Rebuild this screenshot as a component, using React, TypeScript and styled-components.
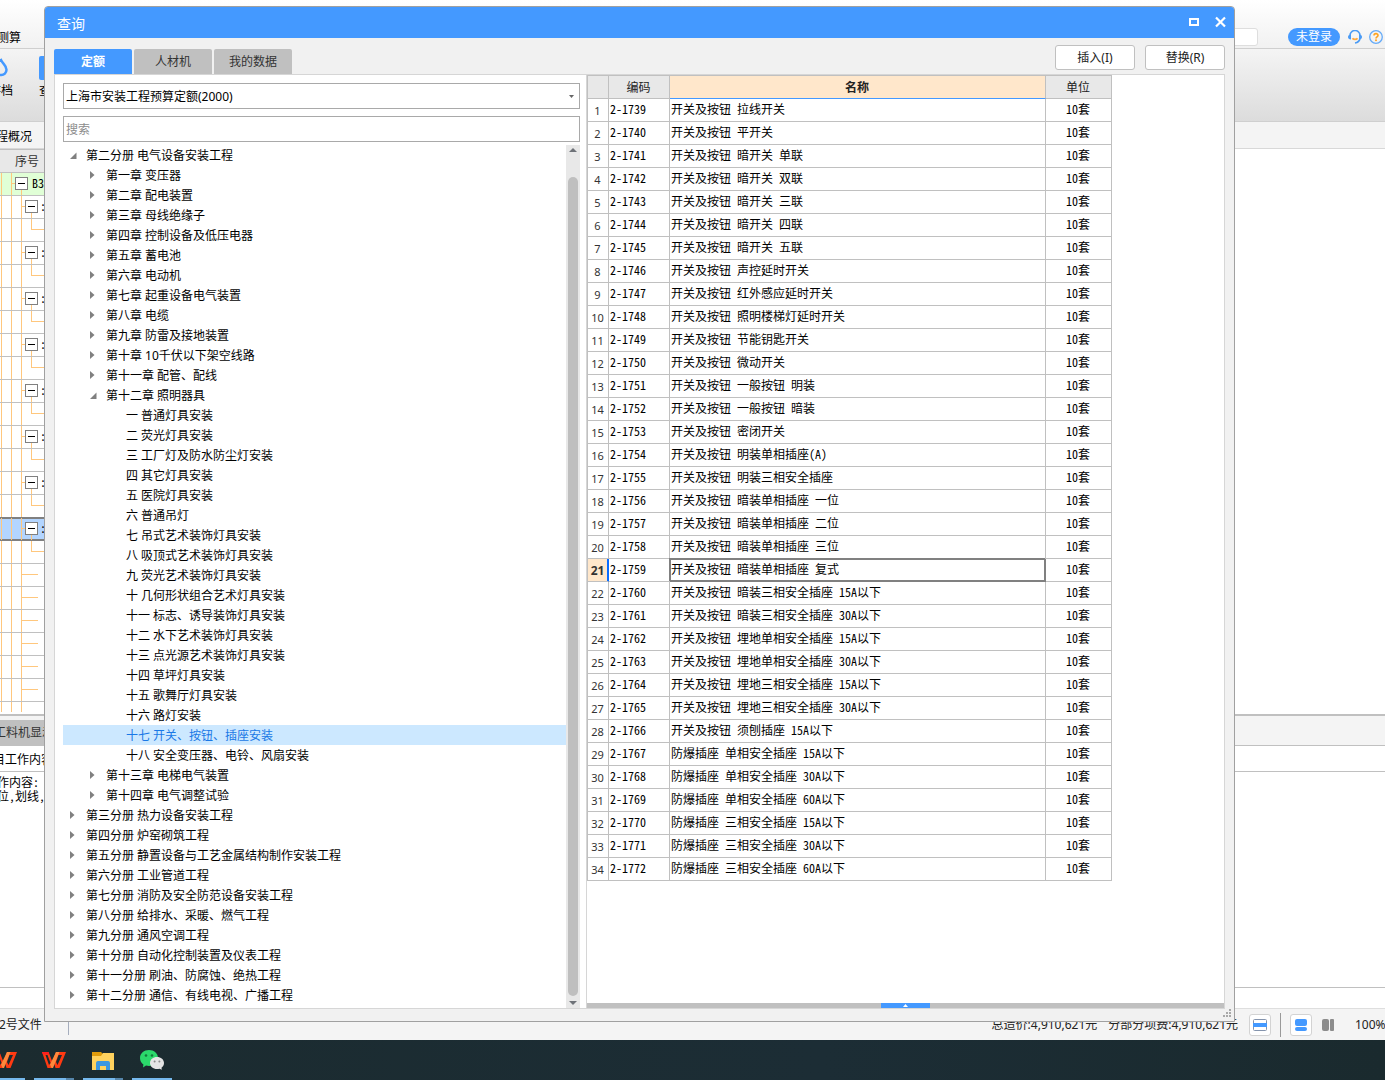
import React, { useState } from 'react';
import styled, { createGlobalStyle, css } from 'styled-components';

const UI_FONT = '"Noto Sans", "Noto Sans CJK SC", sans-serif';
const GRID_FONT = '"Noto Sans Mono CJK SC", "Noto Sans CJK SC", monospace';

const color = {
  blue: '#4499ff',
  line: '#c0c0c0',
  soft: '#d6d6d6',
  panel: '#f1f1f1',
  orange: '#ffc77d',
  peach: '#ffe7cb',
};

const GlobalStyle = createGlobalStyle`
  *, *::before, *::after { box-sizing: border-box; }
  body { margin: 0; overflow: hidden; font: 12px/20px ${UI_FONT}; color: #000; }
  button, input, select { font: inherit; color: inherit; margin: 0; padding: 0; }
  button { border: 0; background: none; white-space: nowrap; }
  h1, h2, p, ul { margin: 0; padding: 0; font: inherit; list-style: none; }
  svg { display: block; flex: none; }
`;

const Desktop = styled.div`
  position: relative;
  display: flex;
  flex-direction: column;
  height: 100vh;
  overflow: hidden;
  background: #fff;
`;

/* ---------- main window behind the dialog ---------- */

const Shell = styled.div`
  display: flex;
  flex-direction: column;
  flex: 1;
  min-height: 0;
  margin-left: -20px;
  white-space: nowrap;
`;

const AppHeader = styled.header`
  display: flex;
  justify-content: space-between;
  align-items: flex-start;
  height: 49px;
  padding: 28px 2px 0 17px;
  border-bottom: 1px solid #cfcfcf;
  background: linear-gradient(#fff, #f1f1f1);
`;

const HeaderTools = styled.div`
  display: flex;
  align-items: center;
  height: 18px;
`;

const HeaderSearch = styled.input`
  width: 220px;
  height: 18px;
  margin-right: 30px;
  border: 1px solid #dedede;
  border-radius: 3px;
  background: #fff;
`;

const LoginPill = styled.button`
  width: 52px;
  height: 18px;
  margin-right: 8px;
  border-radius: 9px;
  background: ${color.blue};
  color: #fff;
  line-height: 18px;
`;

const IconButton = styled.button`
  width: 14px;
  height: 14px;
  & + & { margin-left: 7px; }
`;

const Ribbon = styled.div`
  display: flex;
  gap: 26px;
  height: 73px;
  padding: 7px 0 0 9px;
  border-bottom: 1px solid #cfcfcf;
  background: linear-gradient(#f4f4f4, #dcdcdc);
`;

const RibbonButton = styled.button`
  display: flex;
  flex-direction: column;
  align-items: center;
  gap: 1px;
  height: 50px;
`;

const AppTabs = styled.nav`
  height: 27px;
  padding: 5px 0 0 4px;
  border-bottom: 1px solid #d8d8d8;
  background: #f4f4f4;
`;

const Work = styled.main`
  flex: 1;
  min-height: 0;
  overflow: hidden;
`;

const Outline = styled.div`
  width: 400px;
  font-family: ${GRID_FONT};
`;

const OutlineHead = styled.div`
  height: 24px;
  padding: 1px 0 0 35px;
  border-top: 1px solid ${color.line};
  border-bottom: 1px solid ${color.line};
  background: #e8e8e8;
  color: #333;
`;

const OutlineRow = styled.div<{ $tone?: 'root' | 'active' }>`
  display: flex;
  height: 23px;
  line-height: 20px;
  border-bottom: 1px solid ${color.line};
  ${p => p.$tone === 'root' && css`background: #e0ffd6;`}
  ${p => p.$tone === 'active' && css`
    background: #b3d5ff;
    border-bottom-color: #808080;
    box-shadow: 0 -1px #808080, inset 0 1px #808080, inset 0 -1px #808080;
  `}
`;

const Details = styled.section`
  border-top: 2px solid ${color.line};
  background: #fff;
`;

const DetailsTabs = styled.div`
  display: flex;
  align-items: flex-end;
  height: 30px;
  border-bottom: 1px solid ${color.line};
  background: #f4f4f4;
`;

const DetailsTab = styled.button`
  height: 25px;
  padding: 1px 8px 0 14px;
  background: ${color.line};
  color: #333;
`;

const DetailsTitle = styled.h2`
  height: 26px;
  padding: 4px 0 0 1px;
  border-bottom: 1px solid ${color.line};
`;

const DetailsText = styled.p`
  height: 216px;
  padding: 3px 0 0 5px;
  border-bottom: 1px solid ${color.line};
  font: 12px/14px ${GRID_FONT};
`;

const DetailsFoot = styled.div`
  height: 21px;
  border-bottom: 1px solid #dedede;
`;

const StatusBar = styled.footer`
  display: flex;
  align-items: center;
  height: 31px;
  padding-left: 19px;
  background: #f4f4f4;
  color: #222;
`;

const FileName = styled.span`
  padding-right: 26px;
  border-right: 1px solid #a5adbd;
`;

const Totals = styled.span`
  display: flex;
  gap: 11px;
  margin-left: auto;
  margin-right: 11px;
`;

const ViewButton = styled.button<{ $framed?: boolean }>`
  display: grid;
  place-items: center;
  width: 22px;
  height: 22px;
  ${p => p.$framed && css`
    border: 1px solid #d3d3d3;
    border-radius: 3px;
    background: #fff;
  `}
`;

const LayoutButtons = styled.div`
  display: flex;
  gap: 5px;
`;

const StatusRule = styled.i`
  width: 1px;
  height: 24px;
  margin: 0 9px;
  background: #999;
`;

const ZoomValue = styled.span`
  width: 30px;
  margin-left: 16px;
`;

const TaskBar = styled.nav`
  display: flex;
  gap: 9px;
  height: 40px;
  margin-left: -20px;
  padding-left: 5px;
  background: linear-gradient(90deg, #1b2b2f, #1c2d35 60%, #1a2a2e);
`;

const Task = styled.button<{ $stacked?: boolean }>`
  display: grid;
  place-items: center;
  width: 40px;
  height: 40px;
  padding-top: 2px;
  border-bottom: 2px solid #76b9ed;
  ${p => p.$stacked && css`
    border-image: linear-gradient(90deg, #76b9ed 31px, #5686ab 31px) 2;
  `}
`;

/* ---------- dialog ---------- */

const Dialog = styled.section`
  position: absolute;
  inset: 6px 150px 58px 44px;
  display: flex;
  flex-direction: column;
  border: 1px solid #a0a0a0;
  border-radius: 4px 4px 0 0;
  background: ${color.panel};
  overflow: hidden;
`;

const TitleBar = styled.header`
  display: flex;
  align-items: center;
  justify-content: space-between;
  height: 31px;
  padding: 2px 8px 0 12px;
  background: ${color.blue};
  color: #fff;
  h1 { font-size: 14px; }
`;

const WindowButtons = styled.div`
  display: flex;
  gap: 15px;
  padding-bottom: 3px;
`;

const WindowButton = styled.button`
  width: 11px;
  height: 12px;
`;

const DialogTools = styled.div`
  display: flex;
  justify-content: space-between;
  align-items: flex-end;
  height: 36px;
  padding: 0 9px;
`;

const TabList = styled.div`
  display: flex;
  gap: 2px;
`;

const Tab = styled.button<{ $active: boolean }>`
  width: 78px;
  height: 25px;
  border-radius: 2px 2px 0 0;
  line-height: 24px;
  background: ${p => (p.$active ? color.blue : color.line)};
  color: ${p => (p.$active ? '#fff' : '#333')};
  font-weight: ${p => (p.$active ? 700 : 400)};
`;

const Actions = styled.div`
  display: flex;
  gap: 10px;
  align-self: flex-start;
  padding-top: 7px;
`;

const ActionButton = styled.button`
  width: 80px;
  height: 25px;
  border: 1px solid ${color.line};
  border-radius: 3px;
  background: #fff;
  color: #222;
  line-height: 23px;
`;

const DialogBody = styled.div`
  display: flex;
  flex: 1;
  min-height: 0;
  margin: 0 9px;
  border: 1px solid ${color.soft};
  background: #fff;
`;

const DialogFoot = styled.div`
  display: flex;
  justify-content: flex-end;
  height: 12px;
  padding: 0 3px;
`;

const Catalog = styled.div`
  display: flex;
  flex-direction: column;
  width: 531px;
  flex: none;
  padding: 8px 6px 0 8px;
`;

const SelectBox = styled.div`
  display: grid;
  align-items: center;
  margin-bottom: 7px;
  > * { grid-area: 1 / 1; }
  > svg { justify-self: end; margin-right: 6px; pointer-events: none; }
`;

const fieldBox = css`
  width: 100%;
  height: 26px;
  padding: 1px 2px 0;
  border: 1px solid #a9a9a9;
  border-radius: 0;
  background: #fff;
  outline: 0;
`;

const Select = styled.select`
  ${fieldBox}
  appearance: none;
`;

const Search = styled.input`
  ${fieldBox}
  margin-bottom: 3px;
  &::placeholder { color: #8c8c8c; opacity: 1; }
`;

const TreeArea = styled.div`
  display: flex;
  flex: 1;
  min-height: 0;
`;

const Tree = styled.ul`
  flex: 1;
  overflow: hidden;
`;

const TreeNode = styled.button<{ $level: number; $selected: boolean }>`
  display: flex;
  width: 100%;
  height: 20px;
  padding-left: ${p => 3 + p.$level * 20}px;
  line-height: 22px;
  background: ${p => (p.$selected ? '#cce8ff' : 'transparent')};
  color: ${p => (p.$selected ? '#1a78e6' : '#000')};
`;

const ScrollTrack = styled.div`
  display: flex;
  flex-direction: column;
  align-items: center;
  width: 14px;
  background: #e8e8e8;
`;

const ScrollThumb = styled.div`
  flex: 1;
  width: 10px;
  margin: 22px 0 2px;
  border-radius: 5px;
  background: #bfbfbf;
`;

const Results = styled.div`
  display: flex;
  flex-direction: column;
  flex: 1;
  min-width: 0;
  border-left: 1px solid ${color.soft};
`;

const TableArea = styled.div`
  flex: 1;
  min-height: 0;
  overflow: hidden;
`;

const Table = styled.table`
  width: 525px;
  table-layout: fixed;
  border-collapse: separate;
  border-spacing: 0;
  font: 12px/20px ${GRID_FONT};
`;

const Th = styled.th<{ $active?: boolean }>`
  height: 24px;
  padding: 0 1px 0 0;
  border: 1px solid ${color.line};
  border-left-width: 0;
  background: ${p => (p.$active ? color.peach : '#e8e8e8')};
  font-weight: ${p => (p.$active ? 700 : 400)};
  color: #222;
  ${p => p.$active && css`border-bottom-color: ${color.blue};`}
  &:first-child { border-left-width: 1px; }
`;

const RowNumber = styled.th<{ $current: boolean }>`
  height: 23px;
  padding: 2px 1px 0 0;
  border: 1px solid ${color.line};
  border-top: 0;
  font-family: ${UI_FONT};
  font-size: ${p => (p.$current ? 12 : 11)}px;
  font-weight: ${p => (p.$current ? 700 : 400)};
  color: #333;
  ${p => p.$current && css`
    background: ${color.peach};
    box-shadow: inset -1px 0 #0a6cff;
    border-right-color: #0a6cff;
  `}
`;

const Td = styled.td<{ $center?: boolean; $focus?: boolean }>`
  height: 23px;
  padding: 0 2px 2px 1px;
  border: 1px solid ${color.line};
  border-width: 0 1px 1px 0;
  text-align: ${p => (p.$center ? 'center' : 'left')};
  white-space: nowrap;
  ${p => p.$focus && css`
    border-color: #808080;
    box-shadow: inset 0 0 0 1px #808080, -1px -1px #808080;
  `}
`;

const BottomSplitter = styled.div`
  display: flex;
  justify-content: center;
  height: 5px;
  background: ${color.line};
`;

const SplitterHandle = styled.button`
  display: grid;
  place-items: center;
  width: 49px;
  height: 5px;
  background: ${color.blue};
`;

/* ---------- data ---------- */

type Node = { level: number; text: string; state?: 'open' | 'closed' };

const closed = (level: number, names: string[]): Node[] =>
  names.map(text => ({ level, text, state: 'closed' }));

const nodes: Node[] = [
  { level: 0, text: '第二分册 电气设备安装工程', state: 'open' },
  ...closed(1, [
    '第一章 变压器', '第二章 配电装置', '第三章 母线绝缘子', '第四章 控制设备及低压电器',
    '第五章 蓄电池', '第六章 电动机', '第七章 起重设备电气装置', '第八章 电缆',
    '第九章 防雷及接地装置', '第十章 10千伏以下架空线路', '第十一章 配管、配线',
  ]),
  { level: 1, text: '第十二章 照明器具', state: 'open' },
  ...[
    '一 普通灯具安装', '二 荧光灯具安装', '三 工厂灯及防水防尘灯安装', '四 其它灯具安装',
    '五 医院灯具安装', '六 普通吊灯', '七 吊式艺术装饰灯具安装', '八 吸顶式艺术装饰灯具安装',
    '九 荧光艺术装饰灯具安装', '十 几何形状组合艺术灯具安装', '十一 标志、诱导装饰灯具安装',
    '十二 水下艺术装饰灯具安装', '十三 点光源艺术装饰灯具安装', '十四 草坪灯具安装',
    '十五 歌舞厅灯具安装', '十六 路灯安装', '十七 开关、按钮、插座安装',
    '十八 安全变压器、电铃、风扇安装',
  ].map(text => ({ level: 2, text })),
  ...closed(1, ['第十三章 电梯电气装置', '第十四章 电气调整试验']),
  ...closed(0, [
    '第三分册 热力设备安装工程', '第四分册 炉窑砌筑工程', '第五分册 静置设备与工艺金属结构制作安装工程',
    '第六分册 工业管道工程', '第七分册 消防及安全防范设备安装工程', '第八分册 给排水、采暖、燃气工程',
    '第九分册 通风空调工程', '第十分册 自动化控制装置及仪表工程', '第十一分册 刷油、防腐蚀、绝热工程',
    '第十二分册 通信、有线电视、广播工程',
  ]),
];

const switchNames = [
  '拉线开关', '平开关', '暗开关 单联', '暗开关 双联', '暗开关 三联', '暗开关 四联', '暗开关 五联',
  '声控延时开关', '红外感应延时开关', '照明楼梯灯延时开关', '节能钥匙开关', '微动开关',
  '一般按钮 明装', '一般按钮 暗装', '密闭开关', '明装单相插座(A)', '明装三相安全插座',
  '暗装单相插座 一位', '暗装单相插座 二位', '暗装单相插座 三位', '暗装单相插座 复式',
  '暗装三相安全插座 15A以下', '暗装三相安全插座 30A以下', '埋地单相安全插座 15A以下',
  '埋地单相安全插座 30A以下', '埋地三相安全插座 15A以下', '埋地三相安全插座 30A以下', '须刨插座 15A以下',
];
const proofNames = [
  '单相安全插座 15A以下', '单相安全插座 30A以下', '单相安全插座 60A以下',
  '三相安全插座 15A以下', '三相安全插座 30A以下', '三相安全插座 60A以下',
];
const items = [
  ...switchNames.map(n => `开关及按钮 ${n}`),
  ...proofNames.map(n => `防爆插座 ${n}`),
].map((name, i) => ({ code: `2-${1739 + i}`, name }));

type Branch = 'root' | 'parent' | 'child' | 'leaf';
const branches: Branch[] = [
  'root',
  ...Array.from({ length: 8 }).flatMap((): Branch[] => ['parent', 'child']),
  ...Array.from({ length: 6 }, (): Branch => 'leaf'),
];
const ACTIVE_BRANCH = 15;
const branchWidth = { root: 52, parent: 60, child: 64, leaf: 64 };

/* ---------- drawings ---------- */

const Arrow = ({ state }: { state?: 'open' | 'closed' }) => (
  <svg width="20" height="20" fill="#808080" aria-hidden="true">
    {state === 'closed' && <path d="M4 6l4.500 4-4.500 4z" />}
    {state === 'open' && <path d="M10.500 7.500v6.500H4z" />}
  </svg>
);

const BranchLines = ({ kind }: { kind: Branch }) => (
  <svg width={branchWidth[kind]} height="22" fill="none" stroke={color.orange} shapeRendering="crispEdges" aria-hidden="true">
    <path d="M21.500 0v22M31.500 0v22" />
    {kind === 'root' && <path d="M32 10.500h4M41.500 17v5" />}
    {kind !== 'root' && <path d="M41.500 0v22" />}
    {kind === 'parent' && <path d="M42 10.500h4M51.500 17v5" />}
    {kind === 'child' && <path d="M51.500 0v10.500h13" />}
    {kind === 'leaf' && <path d="M42 10.500h16" />}
    {(kind === 'root' || kind === 'parent') && (
      <g transform={kind === 'root' ? 'translate(35 4)' : 'translate(45 4)'}>
        <rect x=".5" y=".5" width="12" height="12" fill="#fff" stroke="#808080" />
        <path d="M3 6.500h7" stroke="#000" />
      </g>
    )}
  </svg>
);

const LinesTail = () => (
  <svg width="60" height="10" stroke={color.orange} shapeRendering="crispEdges" aria-hidden="true">
    <path d="M21.500 0v10M31.500 0v10M41.500 0v10" />
  </svg>
);

const Headset = () => (
  <svg width="14" height="14" viewBox="0 0 14 14" fill="none" aria-hidden="true">
    <path d="M2 5.500a5 5 0 0 1 10 0M12 8.500c-.5 2.500-2 4-5 4.500" stroke="#4b9bf5" strokeWidth="1.600" />
    <path d="M3 4.500v5C1 9.500 0 8.500 0 7s1-2.500 3-2.500zM11 4.500v5c2 0 3-1 3-2.500s-1-2.500-3-2.500z" fill="#4b9bf5" />
    <path d="M4.500 8.200c1 1.600 4 1.600 5 0" stroke="#ffa940" strokeWidth="1.800" />
  </svg>
);

const Help = () => (
  <svg width="14" height="14" viewBox="0 0 14 14" fill="none" aria-hidden="true">
    <circle cx="7" cy="7" r="6.300" stroke="#66abf8" strokeWidth="1.300" />
    <path d="M5 5.600c0-2.600 4-2.600 4-.2 0 1.400-2 1.500-2 3" stroke="#ffa31f" strokeWidth="1.600" />
    <circle cx="7" cy="10.300" r="1" fill="#ffa31f" />
  </svg>
);

const CloudIcon = () => (
  <svg width="24" height="24" fill="none" aria-hidden="true">
    <path d="M12 4c1.500 4 5.500 5 5.500 9.800A5.200 5.200 0 0 1 12 19H5a4 4 0 0 1 0-8c1 0 1-4 7-7z" stroke={color.blue} strokeWidth="2.500" />
  </svg>
);

const QueryIcon = () => (
  <svg width="24" height="24" fill={color.blue} aria-hidden="true">
    <rect width="22" height="24" rx="2" />
  </svg>
);

const WpsIcon = () => (
  <svg width="24" height="18" viewBox="0 0 24 18" aria-hidden="true">
    <path d="M0 1h6.500l4 10L14 1h10l-6.500 16h-4L12 12l-2.500 5h-4z" fill="#ff3a12" />
    <path d="M14 1h3.500L11 17H9.500L8 13.500z" fill="#ff8a3c" />
    <path d="M3.500 4h2l3 8-1.500 2zM16.500 4h3.500l-4.500 10-1.500-3z" fill="#1c2b2f" />
    <path d="M0 1h6.500l1 2.500H1z" fill="#ff1e1e" />
  </svg>
);

const FolderIcon = () => (
  <svg width="22" height="19" viewBox="0 0 22 19" aria-hidden="true">
    <path d="M0 1h9l2 2h11v5H0z" fill="#e09c0c" />
    <path d="M0 5h9l2-3h11v17H0z" fill="#ffd25e" />
    <path d="M4 19v-7a2 2 0 0 1 2-2h10a2 2 0 0 1 2 2v7h-4v-4H8v4z" fill="#3c97e0" />
  </svg>
);

const WeChatIcon = () => (
  <svg width="24" height="20" viewBox="0 0 24 20" aria-hidden="true">
    <path d="M9 0c5 0 9 3.400 9 8s-4 8-9 8c-1 0-2-.1-3-.4L3 17.500l.4-3C1.300 13 0 10.700 0 8c0-4.600 4-8 9-8z" fill="#2bd96b" />
    <circle cx="6" cy="5.500" r="1.300" fill="#127a3a" />
    <circle cx="12" cy="5.500" r="1.300" fill="#127a3a" />
    <path d="M17 7c4 0 7 2.600 7 6 0 2-1 3.600-2.500 4.700l.3 2.100-2.300-1.100c-.8.2-1.600.3-2.500.3-4 0-7-2.600-7-6s3-6 7-6z" fill="#e4e4e4" />
    <circle cx="14.600" cy="11.500" r="1" fill="#8a8a8a" />
    <circle cx="19.400" cy="11.500" r="1" fill="#8a8a8a" />
  </svg>
);

const MainWindow = () => (
  <Shell>
    <AppHeader>
      <span>测算</span>
      <HeaderTools>
        <HeaderSearch aria-label="搜索功能" />
        <LoginPill type="button">未登录</LoginPill>
        <IconButton type="button" aria-label="客服"><Headset /></IconButton>
        <IconButton type="button" aria-label="帮助"><Help /></IconButton>
      </HeaderTools>
    </AppHeader>
    <Ribbon>
      <RibbonButton type="button"><CloudIcon />存档</RibbonButton>
      <RibbonButton type="button"><QueryIcon />查询</RibbonButton>
    </Ribbon>
    <AppTabs>工程概况</AppTabs>
    <Work>
      <Outline>
        <OutlineHead>序号</OutlineHead>
        {branches.map((kind, i) => (
          <OutlineRow key={i} $tone={kind === 'root' ? 'root' : i === ACTIVE_BRANCH ? 'active' : undefined}>
            <BranchLines kind={kind} />
            {kind === 'root' ? 'B3' : kind === 'parent' ? ':' : ''}
          </OutlineRow>
        ))}
        <LinesTail />
      </Outline>
    </Work>
    <Details>
      <DetailsTabs><DetailsTab type="button">工料机显示</DetailsTab></DetailsTabs>
      <DetailsTitle>项目工作内容</DetailsTitle>
      <DetailsText>工作内容:<br />定位,划线,</DetailsText>
      <DetailsFoot />
    </Details>
    <StatusBar>
      <FileName>2号文件</FileName>
      <Totals>
        <span>总造价:4,910,621元</span>
        <span>分部分项费:4,910,621元</span>
      </Totals>
      <ViewButton type="button" $framed aria-label="窗格">
        <svg width="14" height="12" aria-hidden="true">
          <rect x=".5" y=".5" width="13" height="11" rx="1" fill="#fff" stroke="#8494ad" />
          <path d="M0 4h14v4H0z" fill={color.blue} />
        </svg>
      </ViewButton>
      <StatusRule />
      <LayoutButtons>
        <ViewButton type="button" $framed aria-label="上下布局">
          <svg width="12" height="12" fill={color.blue} aria-hidden="true">
            <rect width="12" height="7" rx="2" /><rect y="8" width="12" height="4" rx="2" />
          </svg>
        </ViewButton>
        <ViewButton type="button" aria-label="左右布局">
          <svg width="12" height="12" fill="#8c8c8c" aria-hidden="true">
            <rect width="7" height="12" rx="2" /><rect x="8" width="4" height="12" rx="1" />
          </svg>
        </ViewButton>
      </LayoutButtons>
      <ZoomValue>100%</ZoomValue>
    </StatusBar>
  </Shell>
);

const tabs = ['定额', '人材机', '我的数据'];
const LIBRARY = '上海市安装工程预算定额(2000)';

const QueryDialog = () => {
  const [tab, setTab] = useState(tabs[0]);
  const [selected, setSelected] = useState('十七 开关、按钮、插座安装');
  const [current, setCurrent] = useState(20);

  return (
    <Dialog role="dialog" aria-labelledby="query-title">
      <TitleBar>
        <h1 id="query-title">查询</h1>
        <WindowButtons>
          <WindowButton type="button" aria-label="最大化">
            <svg width="11" height="12" fill="none" stroke="#fff" aria-hidden="true">
              <path d="M1 2v8M9 2v8" strokeWidth="2" /><path d="M0 3h10M0 9h10" strokeWidth="2" />
            </svg>
          </WindowButton>
          <WindowButton type="button" aria-label="关闭">
            <svg width="11" height="12" stroke="#fff" strokeWidth="2.200" aria-hidden="true">
              <path d="M1 1.500l9 9M10 1.500l-9 9" />
            </svg>
          </WindowButton>
        </WindowButtons>
      </TitleBar>
      <DialogTools>
        <TabList role="tablist">
          {tabs.map(t => (
            <Tab key={t} type="button" role="tab" aria-selected={t === tab} $active={t === tab} onClick={() => setTab(t)}>{t}</Tab>
          ))}
        </TabList>
        <Actions>
          <ActionButton type="button">插入(I)</ActionButton>
          <ActionButton type="button">替换(R)</ActionButton>
        </Actions>
      </DialogTools>
      <DialogBody>
        <Catalog>
          <SelectBox>
            <Select aria-label="定额库" defaultValue={LIBRARY}>
              <option>{LIBRARY}</option>
            </Select>
            <svg width="5" height="3" fill="#666" aria-hidden="true"><path d="M0 0h5L2.500 3z" /></svg>
          </SelectBox>
          <Search type="text" placeholder="搜索" aria-label="搜索" />
          <TreeArea>
            <Tree>
              {nodes.map(n => (
                <li key={n.text}>
                  <TreeNode type="button" $level={n.level} $selected={n.text === selected} onClick={() => setSelected(n.text)}>
                    <Arrow state={n.state} />
                    {n.text}
                  </TreeNode>
                </li>
              ))}
            </Tree>
            <ScrollTrack aria-hidden="true">
              <svg width="14" height="10" fill="#6e7278"><path d="M3 7l4-4 4 4z" /></svg>
              <ScrollThumb />
              <svg width="14" height="10" fill="#6e7278"><path d="M3 3l4 4 4-4z" /></svg>
            </ScrollTrack>
          </TreeArea>
        </Catalog>
        <Results>
          <TableArea>
            <Table>
              <colgroup>
                <col width="22" /><col width="61" /><col width="376" /><col width="66" />
              </colgroup>
              <thead>
                <tr><Th aria-label="行号" /><Th>编码</Th><Th $active>名称</Th><Th>单位</Th></tr>
              </thead>
              <tbody>
                {items.map((it, i) => (
                  <tr key={it.code} onClick={() => setCurrent(i)}>
                    <RowNumber scope="row" $current={i === current}>{i + 1}</RowNumber>
                    <Td>{it.code}</Td>
                    <Td $focus={i === current}>{it.name}</Td>
                    <Td $center>10套</Td>
                  </tr>
                ))}
              </tbody>
            </Table>
          </TableArea>
          <BottomSplitter>
            <SplitterHandle type="button" aria-label="展开">
              <svg width="5" height="3" fill="#fff" aria-hidden="true"><path d="M0 3h5L2.500 0z" /></svg>
            </SplitterHandle>
          </BottomSplitter>
        </Results>
      </DialogBody>
      <DialogFoot>
        <svg width="8" height="8" fill="#a8a8a8" aria-hidden="true">
          <path d="M6 0h2v2H6zM3 3h2v2H3zM6 3h2v2H6zM0 6h2v2H0zM3 6h2v2H3zM6 6h2v2H6z" />
        </svg>
      </DialogFoot>
    </Dialog>
  );
};

export default function App() {
  return (
    <Desktop>
      <GlobalStyle />
      <MainWindow />
      <TaskBar aria-label="任务栏">
        <Task type="button" aria-label="WPS 文字"><WpsIcon /></Task>
        <Task type="button" $stacked aria-label="WPS 表格"><WpsIcon /></Task>
        <Task type="button" $stacked aria-label="文件资源管理器"><FolderIcon /></Task>
        <Task type="button" aria-label="微信"><WeChatIcon /></Task>
      </TaskBar>
      <QueryDialog />
    </Desktop>
  );
}
